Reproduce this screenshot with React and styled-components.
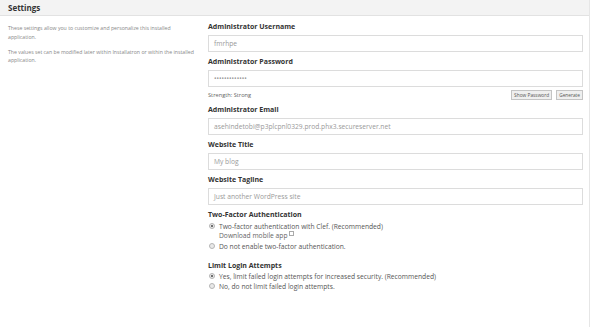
import styled, { createGlobalStyle } from 'styled-components'

const Global = createGlobalStyle`
  body {
    margin: 0;
    background: #fff;
    font-family: "Open Sans", "DejaVu Sans", sans-serif;
  }
`

const Panel = styled.div`
  width: 590px;
  height: 327px;
  border-right: 1px solid #e6e6e6;
  box-sizing: border-box;
  overflow: hidden;
`

const Header = styled.div`
  height: 15px;
  background: #f3f3f3;
  border-bottom: 1px solid #e2e2e2;
  padding-left: 8px;
  font-size: 8px;
  font-weight: 700;
  line-height: 15px;
  color: #333;
`

const Body = styled.div`
  display: grid;
  grid-template-columns: 208px 375px;
`

const Intro = styled.div`
  padding: 8px 8px 0 8px;
`

const Para = styled.p`
  margin: 0 0 6.5px;
  font-size: 5.2px;
  line-height: 8.5px;
  color: #888;
`

const Form = styled.div`
  display: flex;
  flex-direction: column;
  padding-top: 6px;
`

const Label = styled.div`
  font-size: 7px;
  font-weight: 700;
  line-height: 9px;
  color: #333;
  margin-bottom: ${p => p.$gap ?? 4}px;
`

const Input = styled.div`
  height: 17px;
  box-sizing: border-box;
  border: 1px solid #dcdcdc;
  padding-left: 5px;
  font-size: 6.7px;
  line-height: 15px;
  color: #999;
  margin-bottom: ${p => p.$gap ?? 5}px;
`

const StrengthRow = styled.div`
  display: flex;
  align-items: center;
  height: 12px;
  margin: 1px 0 4px;
`

const Strength = styled.span`
  flex: 1;
  font-size: 5.7px;
  color: #666;
`

const Btn = styled.span`
  height: 10px;
  box-sizing: border-box;
  border: 1px solid #c4c4c4;
  background: #efefef;
  font-size: 4.8px;
  line-height: 8px;
  padding: 0 2px;
  color: #555;
  margin-left: 4px;
`

const Option = styled.div`
  display: flex;
  align-items: center;
  height: 10px;
  font-size: 6.7px;
  color: #555;
`

const Sub = styled.div`
  height: 10px;
  line-height: 10px;
  padding-left: 11px;
  font-size: 6.7px;
  color: #666;
`

const Radio = styled.span`
  position: relative;
  width: 6px;
  height: 6px;
  border-radius: 50%;
  box-sizing: border-box;
  border: 1px solid #b5b5b5;
  background: #e9e9e9;
  margin: 0 4px 0 1px;
  flex: none;

  &::after {
    content: '';
    display: ${p => (p.$on ? 'block' : 'none')};
    position: absolute;
    left: 1px;
    top: 1px;
    width: 2px;
    height: 2px;
    border-radius: 50%;
    background: #444;
  }
`

const Ext = styled.span`
  display: inline-block;
  width: 3px;
  height: 3px;
  border: 0.5px solid #aaa;
  margin-left: 1px;
  vertical-align: 2px;
`

const Group = styled.div`
  margin-bottom: ${p => p.$gap || 0}px;
`

const App = () => {
  return (
    <Panel>
      <Global />
      <Header>Settings</Header>
      <Body>
        <Intro>
          <Para>These settings allow you to customize and personalize this installed application.</Para>
          <Para>The values set can be modified later within Installatron or within the installed application.</Para>
        </Intro>
        <Form>
          <Label>Administrator Username</Label>
          <Input>fmrhpe</Input>

          <Label>Administrator Password</Label>
          <Input $gap={1}>•••••••••••••</Input>
          <StrengthRow>
            <Strength>Strength: Strong</Strength>
            <Btn>Show Password</Btn>
            <Btn>Generate</Btn>
          </StrengthRow>

          <Label>Administrator Email</Label>
          <Input>asehindetobi@p3plcpnl0329.prod.phx3.secureserver.net</Input>

          <Label>Website Title</Label>
          <Input>My blog</Input>

          <Label>Website Tagline</Label>
          <Input>Just another WordPress site</Input>

          <Label $gap={2}>Two-Factor Authentication</Label>
          <Group $gap={10}>
            <Option><Radio $on />Two-factor authentication with Clef. (Recommended)</Option>
            <Sub>Download mobile app<Ext /></Sub>
            <Option><Radio />Do not enable two-factor authentication.</Option>
          </Group>

          <Label $gap={1}>Limit Login Attempts</Label>
          <Group>
            <Option><Radio $on />Yes, limit failed login attempts for increased security. (Recommended)</Option>
            <Option><Radio />No, do not limit failed login attempts.</Option>
          </Group>
        </Form>
      </Body>
    </Panel>
  )
}

export default App
